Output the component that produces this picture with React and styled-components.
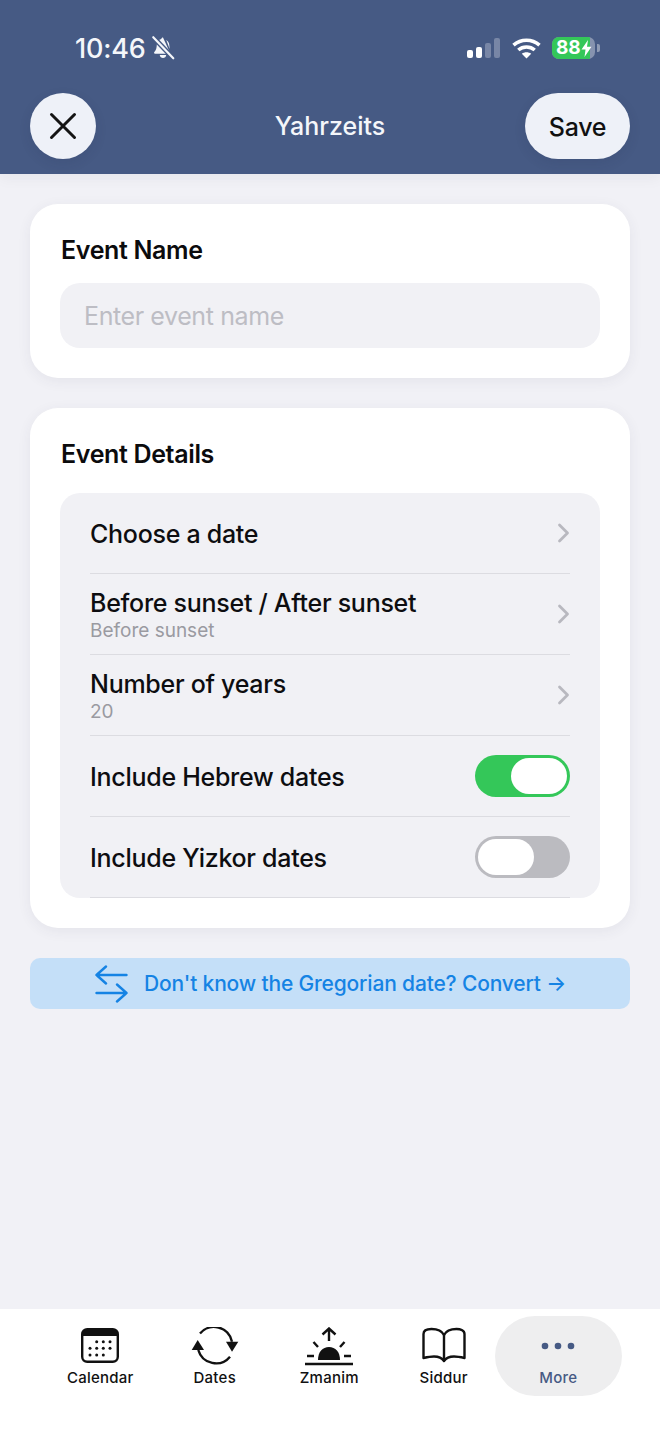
import React from "react";
import styled, { createGlobalStyle } from "styled-components";

const Global = createGlobalStyle`
  html, body { margin: 0; padding: 0; background: #f1f1f6; }
  * { box-sizing: border-box; }
  body { font-family: Inter, "Liberation Sans", sans-serif; -webkit-font-smoothing: antialiased; }
`;

const Page = styled.div`
  width: 660px;
  height: 1434px;
  display: flex;
  flex-direction: column;
  background: #f1f1f6;
  overflow: hidden;
`;

const Header = styled.header`
  height: 174px;
  flex: none;
  background: #465a84;
  display: flex;
  flex-direction: column;
  padding: 29px 30px 0;
  box-shadow: 0 4px 14px rgba(40, 40, 60, 0.05);
  z-index: 1;
`;

const StatusBar = styled.div`
  height: 38px;
  display: flex;
  align-items: center;
  justify-content: space-between;
  padding: 0 30px 0 45px;
  color: #fff;
`;

const TimeGroup = styled.div`
  display: flex;
  align-items: center;
  gap: 4px;
`;

const Time = styled.span`
  font-size: 27px;
  font-weight: 500;
  letter-spacing: -0.2px;
  color: #f4f6fa;
`;

const StatusIcons = styled.div`
  display: flex;
  align-items: center;
  gap: 12px;
`;

const Battery = styled.div`
  position: relative;
  width: 43px;
  height: 22px;
  margin-left: -1px;
  border-radius: 7px;
  overflow: hidden;
  background: rgba(255, 255, 255, 0.35);
  font-size: 19px;
  font-weight: 700;
  color: #fff;
  display: flex;
  align-items: center;
  padding-left: 4px;
`;

const BatteryFill = styled.span`
  position: absolute;
  left: 0;
  top: 0;
  bottom: 0;
  background: #34c759;
`;

const BatteryLabel = styled.span`
  position: relative;
  display: flex;
  align-items: center;
  line-height: 22px;
`;

const BatteryCap = styled.span`
  width: 3px;
  height: 8px;
  margin-left: -10px;
  border-radius: 0 2px 2px 0;
  background: rgba(255, 255, 255, 0.4);
`;

const NavRow = styled.div`
  margin-top: 26px;
  height: 66px;
  display: grid;
  grid-template-columns: 105px 1fr 105px;
  align-items: center;
`;

const CloseButton = styled.button`
  width: 66px;
  height: 66px;
  border: 0;
  padding: 0;
  border-radius: 50%;
  background: #eef1f8;
  display: flex;
  align-items: center;
  justify-content: center;
  box-shadow: 0 4px 12px rgba(30, 40, 70, 0.12);
`;

const Title = styled.h1`
  margin: 0;
  text-align: center;
  font-size: 25px;
  font-weight: 500;
  letter-spacing: 0;
  color: #f4f6fa;
`;

const SaveButton = styled.button`
  width: 105px;
  height: 66px;
  border: 0;
  padding: 2px 0 0;
  border-radius: 33px;
  background: #eef1f8;
  color: #111;
  font: 500 25px Inter, "Liberation Sans", sans-serif;
  letter-spacing: -0.3px;
  box-shadow: 0 4px 12px rgba(30, 40, 70, 0.12);
`;

const Main = styled.main`
  flex: 1;
  padding: 30px 30px 0;
  display: flex;
  flex-direction: column;
  gap: 30px;
`;

const Card = styled.section`
  background: #fff;
  border-radius: 28px;
  padding: 30px;
  box-shadow: 0 3px 14px rgba(60, 60, 90, 0.07);
`;

const CardTitle = styled.h2`
  margin: 0 0 ${(p) => p.$gap}px 1px;
  height: 31px;
  line-height: 33px;
  font-size: 25px;
  font-weight: 600;
  letter-spacing: -0.35px;
  color: #0b0b0d;
`;

const Input = styled.div`
  height: 65px;
  border-radius: 20px;
  background: #f1f1f5;
  color: #bdbdc4;
  font-size: 25px;
  line-height: 67px;
  padding-left: 24px;
  letter-spacing: -0.4px;
`;

const List = styled.div`
  border-radius: 20px;
  background: #f1f1f5;
  padding: 0 30px;
  height: 405px;
`;

const Row = styled.div`
  height: 81px;
  display: flex;
  align-items: center;
  justify-content: space-between;
  border-bottom: 1.5px solid #dcdce1;
`;

const RowText = styled.div`
  display: flex;
  flex-direction: column;
`;

const RowLabel = styled.span`
  font-size: 25px;
  line-height: 30px;
  padding-top: ${(p) => (p.$solo ? "2px" : "0")};
  font-weight: 500;
  letter-spacing: -0.28px;
  color: #0d0d10;
`;

const RowSub = styled.span`
  font-size: 19px;
  line-height: 23px;
  margin: 1px 0 -1px;
  color: #9a9aa1;
`;

const Toggle = styled.div`
  position: relative;
  width: 95px;
  height: 42px;
  border-radius: 21px;
  background: ${(p) => (p.$on ? "#34c759" : "#bbbbc0")};
`;

const Knob = styled.span`
  position: absolute;
  top: 3px;
  bottom: 3px;
  width: 56px;
  border-radius: 18px;
  background: #fff;
  ${(p) => (p.$on ? "right: 3px;" : "left: 3px;")}
`;

const Banner = styled.div`
  height: 51px;
  border-radius: 10px;
  background: #c4dff8;
  color: #1583e4;
  display: flex;
  align-items: center;
  justify-content: center;
  gap: 16px;
  padding-left: 1px;
  font-size: 21px;
  font-weight: 500;
  letter-spacing: -0.17px;
`;

const TabBar = styled.nav`
  height: 125px;
  flex: none;
  background: #fff;
  display: grid;
  grid-template-columns: repeat(5, 114.5px);
  padding: 7px 0 0 43px;
`;

const Tab = styled.div`
  position: relative;
  height: 80px;
  display: flex;
  flex-direction: column;
  align-items: center;
  color: ${(p) => (p.$active ? "#465a84" : "#111")};
  font-size: 15px;
  font-weight: 450;
  letter-spacing: 0.25px;
`;

const Pill = styled.span`
  position: absolute;
  inset: 0 -6px;
  border-radius: 40px;
  background: #eeeeef;
`;

const TabIcon = styled.span`
  position: relative;
  height: 41px;
  margin-top: 11px;
  display: flex;
  align-items: flex-start;
  justify-content: center;
`;

const TabLabel = styled.span`
  position: relative;
  line-height: 20px;
`;

const DotsWrap = styled.span`
  padding-top: 15px;
  display: flex;
`;

const Chevron = () => (
  <svg width="14" height="22" viewBox="0 0 14 22" fill="none" stroke="#b8b8bf" strokeWidth="2.8" strokeLinecap="round" strokeLinejoin="round">
    <path d="M3.500 3 L11.500 11 L3.500 19" />
  </svg>
);

const BellOff = () => (
  <svg width="26" height="26" viewBox="0 0 24 24">
    <path d="M12 2.2c-.9 0-1.5.6-1.600 1.400C7.900 4.300 6.500 6.400 6.300 9.100c-.2 3-.6 5.100-2.300 6.700-.6.600-.2 1.500.6 1.500h14.300z" fill="#f4f6fa" />
    <path d="M9 18.500h6c-.2 1.700-1.400 2.800-3 2.800s-2.800-1.100-3-2.800z" fill="#f4f6fa" />
    <path d="M15 4.500c1.800 1 2.700 2.800 2.800 4.800l.4 3.700z" fill="#f4f6fa" />
    <path d="M3.500 2.500 L21.500 21.500" stroke="#465a84" strokeWidth="4.500" />
    <path d="M3 2 L21.500 21.500" stroke="#f4f6fa" strokeWidth="2" strokeLinecap="round" />
  </svg>
);

const Signal = () => (
  <svg width="33" height="21" viewBox="0 0 33 21">
    <rect x="0" y="12" width="6" height="8" rx="2" fill="#fff" />
    <rect x="9" y="9" width="6" height="11" rx="2" fill="#fff" />
    <rect x="18" y="5" width="6" height="15" rx="2" fill="#7886a6" />
    <rect x="27" y="0" width="6" height="20" rx="2" fill="#7886a6" />
  </svg>
);

const Wifi = () => (
  <svg width="29" height="21" viewBox="0 0 29 21" fill="none" stroke="#fff" strokeWidth="3.600">
    <path d="M1.500 7.200C9 .6 20 .6 27.500 7.200" />
    <path d="M6.300 12C11 8 18 8 22.700 12" />
    <path d="M14.500 20.500l-4.700-4.800c2.700-2 6.700-2 9.400 0z" fill="#fff" stroke="none" />
  </svg>
);

const Bolt = () => (
  <svg width="11" height="17" viewBox="0 0 11 17" fill="#fff">
    <path d="M7 0 L0.500 9.500 H4.500 L3.500 17 L10.500 6.800 H6 Z" />
  </svg>
);

const CloseIcon = () => (
  <svg width="28" height="28" viewBox="0 0 28 28" stroke="#141414" strokeWidth="3" strokeLinecap="round">
    <path d="M2.500 2.500 L25.500 25.500 M25.500 2.500 L2.500 25.500" />
  </svg>
);

const SwapIcon = () => (
  <svg width="33" height="38" viewBox="0 0 33 38" fill="none" stroke="#1583e4" strokeWidth="2.400" strokeLinecap="round" strokeLinejoin="round">
    <path d="M1.500 10 H31.500 M11 1.500 L1.500 10 L11 18.500" />
    <path d="M1.500 28 H31.500 M22 19.500 L31.500 28 L22 36.500" />
  </svg>
);

const CalendarIcon = () => {
  const dots = [
    [15.7, 14.7], [22.3, 14.7], [29, 14.7],
    [9, 21.3], [15.7, 21.3], [22.3, 21.3], [29, 21.3],
    [9, 28], [15.7, 28], [22.3, 28],
  ];
  return (
    <svg width="38" height="36" viewBox="0 0 38 36">
      <rect x="1.200" y="2.200" width="35.600" height="32.600" rx="5" fill="#fff" stroke="#111" strokeWidth="2.400" />
      <path d="M1 9V7a5 5 0 0 1 5-5h26a5 5 0 0 1 5 5v2z" fill="#111" />
      {dots.map(([x, y]) => (
        <circle key={`${x}-${y}`} cx={x} cy={y} r="1.500" fill="#111" />
      ))}
    </svg>
  );
};

const DatesIcon = () => (
  <svg width="48" height="40" viewBox="0 0 48 40" fill="none">
    <path d="M9 6.500 A18.300 18.300 0 0 1 41 14.700" stroke="#111" strokeWidth="2.400" />
    <path d="M7.300 23 A18.300 18.300 0 0 0 39 29.700" stroke="#111" strokeWidth="2.400" />
    <path d="M6.700 13 L0.700 23 L13 23 Z" fill="#111" />
    <path d="M35 14.700 L47.300 14.700 L41 24.700 Z" fill="#111" />
  </svg>
);

const ZmanimIcon = () => (
  <svg width="50" height="40" viewBox="0 0 50 40" fill="none" stroke="#111" strokeWidth="2.400">
    <path d="M25 14 V2 M18.500 7.500 L25 1.500 L31.500 7.500" />
    <path d="M9.500 15 L14 20 M40.500 15 L36 20 M3 29 H10 M40 29 H47" />
    <path d="M14 33 C14 25 18.500 20 25 20 C31.500 20 36 25 36 33 Z" fill="#111" stroke="none" />
    <path d="M1 37 H49" strokeWidth="2.600" />
  </svg>
);

const BookIcon = () => (
  <svg width="44" height="36" viewBox="0 0 44 36" fill="none" stroke="#111" strokeWidth="2.400" strokeLinejoin="round" strokeLinecap="round">
    <path d="M22 8 C20 4 15 2 9.500 2 C6 2 1.500 3 1.500 7 V31 C6 30 9 29.500 12 29.500 C16 29.500 20 31 22 34 C24 31 28 29.500 32 29.500 C35 29.500 38 30 42.500 31 V7 C42.500 3 38 2 34.500 2 C29 2 24 4 22 8 Z" />
    <path d="M22 8 V33" />
  </svg>
);

const DotsIcon = () => (
  <svg width="34" height="8" viewBox="0 0 34 8" fill="#465a84">
    <circle cx="4" cy="4" r="3.300" />
    <circle cx="17" cy="4" r="3.300" />
    <circle cx="30" cy="4" r="3.300" />
  </svg>
);

const rows = [
  { label: "Choose a date" },
  { label: "Before sunset / After sunset", sub: "Before sunset" },
  { label: "Number of years", sub: "20" },
  { label: "Include Hebrew dates", toggle: true, on: true },
  { label: "Include Yizkor dates", toggle: true, on: false },
];

const tabs = [
  { label: "Calendar", icon: <CalendarIcon /> },
  { label: "Dates", icon: <DatesIcon /> },
  { label: "Zmanim", icon: <ZmanimIcon /> },
  { label: "Siddur", icon: <BookIcon /> },
  { label: "More", icon: <DotsWrap><DotsIcon /></DotsWrap>, active: true },
];

export default function App() {
  return (
    <Page>
      <Global />
      <Header>
        <StatusBar>
          <TimeGroup>
            <Time>10:46</Time>
            <BellOff />
          </TimeGroup>
          <StatusIcons>
            <Signal />
            <Wifi />
            <Battery>
              <BatteryFill style={{ width: "88%" }} />
              <BatteryLabel>88<Bolt /></BatteryLabel>
            </Battery>
            <BatteryCap />
          </StatusIcons>
        </StatusBar>
        <NavRow>
          <CloseButton aria-label="Close"><CloseIcon /></CloseButton>
          <Title>Yahrzeits</Title>
          <SaveButton>Save</SaveButton>
        </NavRow>
      </Header>
      <Main>
        <Card>
          <CardTitle $gap={18}>Event Name</CardTitle>
          <Input>Enter event name</Input>
        </Card>
        <Card>
          <CardTitle $gap={24}>Event Details</CardTitle>
          <List>
            {rows.map((r) => (
              <Row key={r.label}>
                <RowText>
                  <RowLabel $solo={!r.sub}>{r.label}</RowLabel>
                  {r.sub && <RowSub>{r.sub}</RowSub>}
                </RowText>
                {r.toggle ? (
                  <Toggle $on={r.on}><Knob $on={r.on} /></Toggle>
                ) : (
                  <Chevron />
                )}
              </Row>
            ))}
          </List>
        </Card>
        <Banner>
          <SwapIcon />
          <span>Don't know the Gregorian date? Convert →</span>
        </Banner>
      </Main>
      <TabBar>
        {tabs.map((t) => (
          <Tab key={t.label} $active={t.active}>
            {t.active && <Pill />}
            <TabIcon>{t.icon}</TabIcon>
            <TabLabel>{t.label}</TabLabel>
          </Tab>
        ))}
      </TabBar>
    </Page>
  );
}
